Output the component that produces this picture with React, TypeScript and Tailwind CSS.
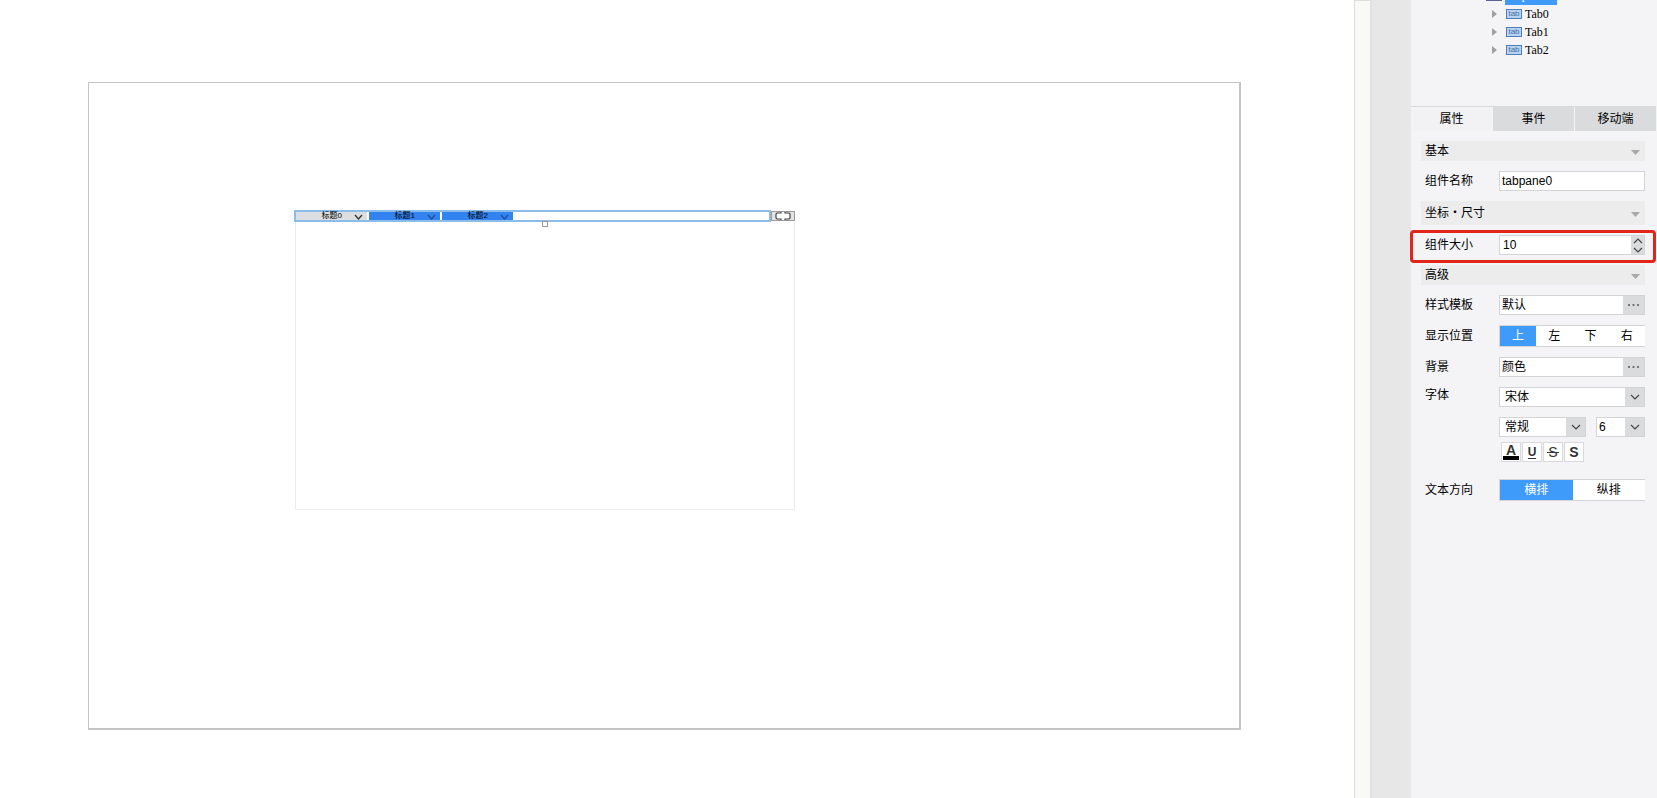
import { useState } from "react";
import type { ReactNode } from "react";

const treeTabs = ["Tab0", "Tab1", "Tab2"];
const panelTabs = ["属性", "事件", "移动端"];
const paneTabs = ["标题0", "标题1", "标题2"];

function Chevron({ up = false }: { up?: boolean }) {
  return (
    <svg width="10" height="6" viewBox="0 0 10 6" fill="none" stroke="#444" strokeWidth="1.2" aria-hidden="true">
      <path d={up ? "M1 5l4-4 4 4" : "M1 1l4 4 4-4"} />
    </svg>
  );
}

function SectionHeader({ title, tall = false }: { title: string; tall?: boolean }) {
  return (
    <button
      type="button"
      aria-expanded="true"
      className={`flex w-full items-center justify-between bg-[#ececec] pl-1 pr-[5px] text-left ${tall ? "h-6" : "h-5"}`}
    >
      <span>{title}</span>
      <svg width="9" height="5" viewBox="0 0 9 5" fill="#a8a8a8" className="mt-[3px]" aria-hidden="true">
        <path d="M0 0h9L4.500 5z" />
      </svg>
    </button>
  );
}

interface RowProps {
  label: string;
  htmlFor?: string;
  highlight?: boolean;
  children: ReactNode;
}

function Row({ label, htmlFor, highlight, children }: RowProps) {
  return (
    <div className="relative flex items-center pl-1">
      <label htmlFor={htmlFor} className="w-[74px] shrink-0">
        {label}
      </label>
      <div className="min-w-0 flex-1">{children}</div>
      {highlight && (
        <div className="pointer-events-none absolute -bottom-2 -left-[11px] -right-[11px] -top-[5px] rounded-[4px] border-[3px] border-[#e1251b]" />
      )}
    </div>
  );
}

/* 带“…”按钮的输入框 */
function PickerInput({ id, value }: { id: string; value: string }) {
  return (
    <div className="flex h-5 border border-[#d4d4d6] bg-white">
      <input id={id} defaultValue={value} className="min-w-0 flex-1 px-[2px] outline-none" />
      <button type="button" aria-label="更多" className="flex w-[21px] items-center justify-center bg-[#dadbdd]">
        <svg width="11" height="2" viewBox="0 0 11 2" fill="#777" aria-hidden="true">
          <path d="M0 0h2v2H0zM4.500 0h2v2h-2zM9 0h2v2H9z" />
        </svg>
      </button>
    </div>
  );
}

interface DropdownProps {
  id: string;
  name: string;
  options: string[];
  className?: string;
}

function Dropdown({ id, name, options, className = "pl-[5px]" }: DropdownProps) {
  return (
    <div className={`relative h-5 border border-[#d4d4d6] bg-white ${className}`}>
      <select id={id} aria-label={name} className="block h-full w-full appearance-none pr-5 outline-none">
        {options.map((option) => (
          <option key={option}>{option}</option>
        ))}
      </select>
      <span className="pointer-events-none absolute inset-y-0 right-0 flex w-[19px] items-center justify-center bg-[#dadbdd]">
        <Chevron />
      </span>
    </div>
  );
}

function Segmented({ name, options }: { name: string; options: string[] }) {
  const [active, setActive] = useState(options[0]);
  return (
    <div role="group" aria-label={name} className="flex h-[22px] border-y border-l border-[#d4d4d6] bg-white">
      {options.map((option) => (
        <button
          key={option}
          type="button"
          aria-pressed={option === active}
          onClick={() => setActive(option)}
          className={`flex-1 ${option === active ? "bg-[#3f9bf9] text-white" : ""}`}
        >
          {option}
        </button>
      ))}
    </div>
  );
}

function StyleButton({ label, children }: { label: string; children: ReactNode }) {
  return (
    <button
      type="button"
      aria-label={label}
      className="flex h-5 w-5 flex-col items-center justify-center border border-[#d9d9db] bg-white text-sm leading-none text-[#333]"
    >
      {children}
    </button>
  );
}

/* 画布上的 tab 块组件 */
function TabPane() {
  return (
    <div className="absolute left-[205px] top-[127px] w-[501px] text-[8px] leading-none">
      <div className="flex h-3">
        <div className="relative flex min-w-0 flex-1 gap-[2px] border-2 border-[#8cbdea] bg-white">
          {paneTabs.map((tab, i) => (
            <button
              key={tab}
              type="button"
              className={`flex w-[71px] items-center justify-end gap-3 pr-1 ${i === 0 ? "bg-[#dcdee1]" : "bg-[#3283f0]"}`}
            >
              <span>{tab}</span>
              <svg
                width="9"
                height="6"
                viewBox="0 0 9 6"
                fill="none"
                stroke={i === 0 ? "#333" : "#1f4f94"}
                strokeWidth="1.3"
                className="mt-[2px]"
                aria-hidden="true"
              >
                <path d="M1 1l3.500 4L8 1" />
              </svg>
            </button>
          ))}
          <span className="absolute left-[246px] top-[9px] h-[6px] w-[6px] border border-[#999] bg-white" />
        </div>
        <button
          type="button"
          aria-label="调整"
          className="mb-px mt-px flex w-6 items-center justify-center border border-[#999] bg-[#e4e4e4]"
        >
          <svg width="16" height="8" viewBox="0 0 16 8" fill="none" className="shrink-0" aria-hidden="true">
            <path d="M1 1h14v6H1zM6 0h4v8H6z" fill="#fff" />
            <path d="M6 0v1H2L1 2v4l1 1h4v1M10 0v1h4l1 1v4l-1 1h-4v1" stroke="#444" strokeWidth="1.2" />
          </svg>
        </button>
      </div>
      <div className="ml-px h-[288px] border border-t-0 border-[#ebebeb]" />
    </div>
  );
}

function ComponentTree() {
  return (
    <ul className="h-[106px] pl-[75px] font-['Liberation_Serif','Noto_Sans_CJK_SC',serif]">
      <li className="flex h-[5px] items-end gap-[3px] overflow-hidden">
        <span className="mb-1 h-4 w-4 shrink-0 bg-[#5a648c]" />
        <span className="h-4 w-[52px] shrink-0 bg-[#3f9bf9] pl-[2px] leading-3 text-white">tabpane0</span>
      </li>
      {treeTabs.map((tab) => (
        <li key={tab} className="flex h-[18px] items-center pl-[6px]">
          <svg width="5" height="8" viewBox="0 0 5 8" fill="#a0a0a0" className="mr-[9px]" aria-hidden="true">
            <path d="M0 0l5 4-5 4z" />
          </svg>
          <span className="mr-[3px] flex h-[10px] w-4 items-center justify-center border border-[#4f7db5] bg-[#b5d3f2] font-['Liberation_Sans',sans-serif] text-[8px] leading-none text-[#47709f]">
            tab
          </span>
          <span>{tab}</span>
        </li>
      ))}
    </ul>
  );
}

export default function App() {
  const [panelTab, setPanelTab] = useState(panelTabs[0]);
  const [size, setSize] = useState(10);

  return (
    <div className="flex min-h-screen bg-white font-['Liberation_Sans','Noto_Sans_CJK_SC',sans-serif] text-xs leading-4 text-black">
      {/* 画布 */}
      <main className="flex min-w-0 flex-1 pb-[68px] pl-[88px] pr-[113px] pt-[82px]">
        <div className="relative flex-1 border border-b-2 border-r-2 border-[#c4c4c4]">
          <TabPane />
        </div>
      </main>

      {/* 滚动条与分隔区 */}
      <div className="w-4 shrink-0 border-l border-t border-[#deded8] bg-[#f9f9f6]" />
      <div className="w-[41px] shrink-0 border-l-2 border-[#e1e1e1] bg-[#e7e7e7]" />

      <aside className="w-[246px] shrink-0 bg-[#f4f4f7]">
        <ComponentTree />

        <div role="tablist" className="mr-px flex h-[25px] gap-px border-t border-[#d9d9dc]">
          {panelTabs.map((tab) => (
            <button
              key={tab}
              type="button"
              role="tab"
              aria-selected={tab === panelTab}
              onClick={() => setPanelTab(tab)}
              className={`flex-1 ${tab === panelTab ? "bg-[#f2f2f4]" : "bg-[#dadbdd]"}`}
            >
              {tab}
            </button>
          ))}
        </div>

        <div className="flex flex-col gap-[10px] pl-[10px] pr-3 pt-[10px]">
          <SectionHeader title="基本" />
          <Row label="组件名称" htmlFor="name">
            <input
              id="name"
              defaultValue="tabpane0"
              className="block h-5 w-full border border-[#d4d4d6] bg-white px-[2px] outline-none"
            />
          </Row>

          <SectionHeader title="坐标・尺寸" tall />
          <Row label="组件大小" htmlFor="size" highlight>
            <div className="flex h-5 border border-[#d4d4d6] bg-white">
              <input
                id="size"
                value={size}
                inputMode="numeric"
                onChange={(e) => setSize(Number(e.target.value) || 0)}
                className="min-w-0 flex-1 px-[3px] outline-none"
              />
              <div className="flex w-[13px] flex-col bg-[#dadbdd]">
                <button
                  type="button"
                  aria-label="增加"
                  onClick={() => setSize(size + 1)}
                  className="flex flex-1 items-center justify-center"
                >
                  <Chevron up />
                </button>
                <button
                  type="button"
                  aria-label="减少"
                  onClick={() => setSize(size - 1)}
                  className="flex flex-1 items-center justify-center"
                >
                  <Chevron />
                </button>
              </div>
            </div>
          </Row>

          <SectionHeader title="高级" />
          <Row label="样式模板" htmlFor="template">
            <PickerInput id="template" value="默认" />
          </Row>
          <Row label="显示位置">
            <Segmented name="显示位置" options={["上", "左", "下", "右"]} />
          </Row>
          <Row label="背景" htmlFor="background">
            <PickerInput id="background" value="颜色" />
          </Row>

          {/* 字体 */}
          <div className="flex items-start pl-1">
            <label htmlFor="font" className="w-[74px] shrink-0">
              字体
            </label>
            <div className="min-w-0 flex-1">
              <Dropdown id="font" name="字体" options={["宋体", "黑体", "楷体"]} />
              <div className="mt-[10px] flex gap-[10px]">
                <Dropdown id="weight" name="字形" options={["常规", "加粗", "倾斜"]} className="flex-1 pl-[5px]" />
                <Dropdown id="font-size" name="字号" options={["6", "8", "10", "12"]} className="w-[49px] pl-[2px]" />
              </div>
              <div className="mb-[7px] mt-[5px] flex gap-px pl-[2px]">
                <StyleButton label="字体颜色">
                  <span className="font-bold leading-3">A</span>
                  <span className="h-1 w-4 bg-black" />
                </StyleButton>
                <StyleButton label="下划线">
                  <span className="border-b border-[#333] text-xs font-bold leading-3">U</span>
                </StyleButton>
                <StyleButton label="删除线">
                  <span className="relative">
                    S
                    <span className="absolute -left-px -right-px top-[7px] h-px bg-[#333]" />
                  </span>
                </StyleButton>
                <StyleButton label="阴影">
                  <span className="font-bold">S</span>
                </StyleButton>
              </div>
            </div>
          </div>

          <Row label="文本方向">
            <Segmented name="文本方向" options={["横排", "纵排"]} />
          </Row>
        </div>
      </aside>
    </div>
  );
}
